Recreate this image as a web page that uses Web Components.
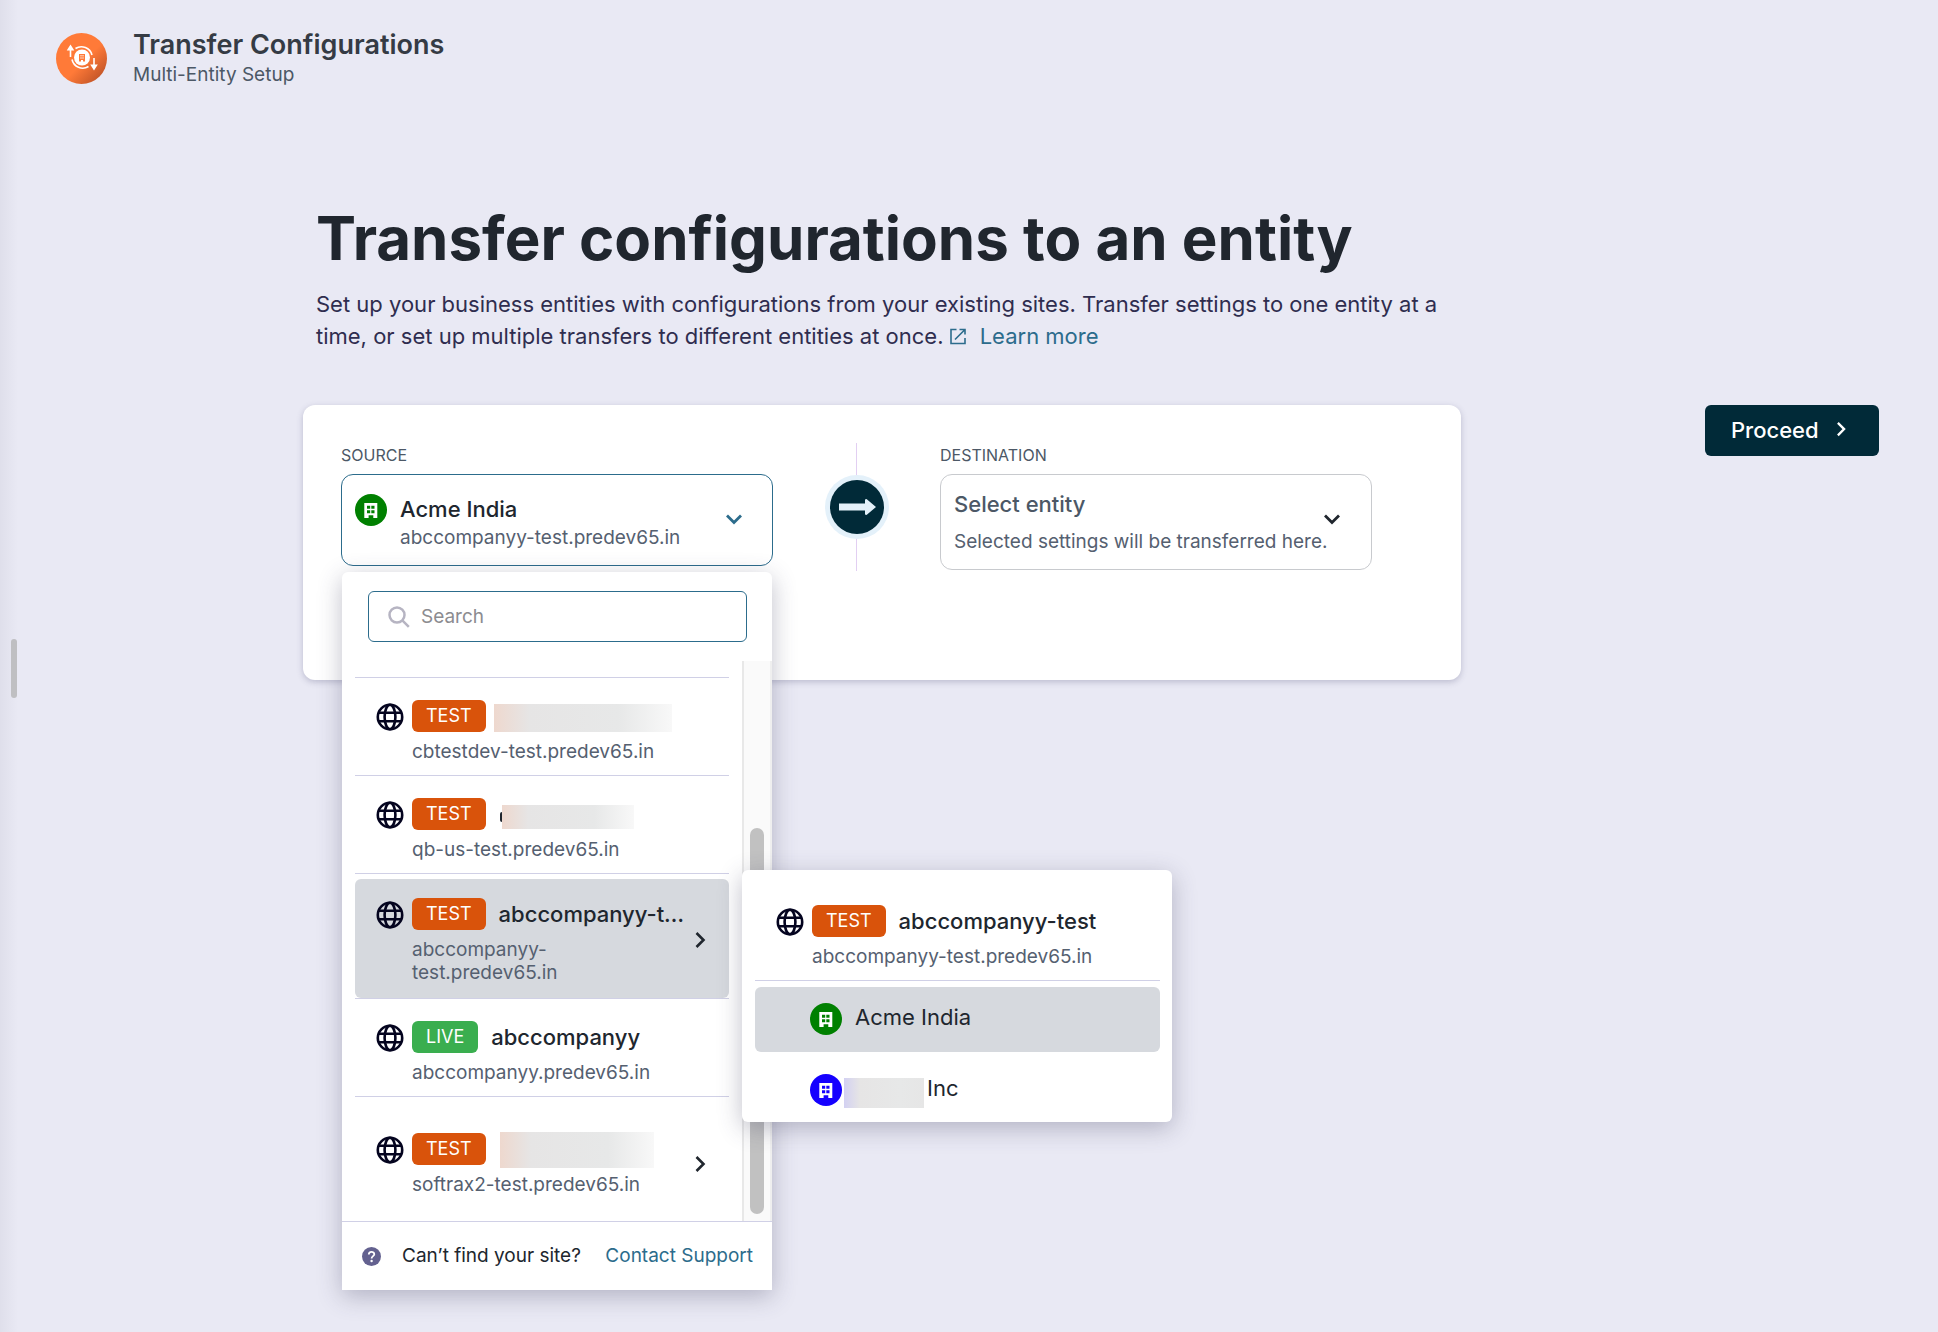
<!DOCTYPE html>
<html lang="en">
<head>
<meta charset="utf-8">
<title>Transfer Configurations</title>
<style>
    body {
        margin: 0;
        min-height: 100vh;
        background: #e9e9f4;
        color: #20262e;
        font-family: Inter, "Liberation Sans", sans-serif;
    }
</style>
</head>
<body>
<transfer-page></transfer-page>

<script>
// Icons shared by the elements below
const ICONS = {
    globe: `<svg width="28" height="28" viewBox="0 0 28 28" fill="none" stroke="#04041f" stroke-width="2.6">
        <circle cx="14" cy="14" r="12.2"/><ellipse cx="14" cy="14" rx="5.4" ry="12.2"/><path d="M2.4 9.8h23.2M2.4 18.2h23.2"/></svg>`,
    building: `<svg width="32" height="32" viewBox="0 0 32 32">
        <circle cx="16" cy="16" r="16" fill="currentColor"/>
        <path fill="#fff" fill-rule="evenodd" d="M9.300 9h13v15h-4v-2.700h-4.700V24H9.300zM12 11.700v3.100h3.200v-3.100zM16.300 11.700v3.100h3.200v-3.100zM12 16.200v3.100h3.200v-3.100zM16.300 16.200v3.100h3.200v-3.100z"/></svg>`,
    down: `<svg width="18" height="18" viewBox="0 0 18 18" fill="none" stroke="currentColor" stroke-width="2.8"><path d="M2 1.500l7 7 7-7"/></svg>`,
    right: `<svg width="18" height="18" viewBox="0 0 18 18" fill="none" stroke="currentColor" stroke-width="2.6"><path d="M5.500 1l7 7-7 7"/></svg>`
};

class EnvBadge extends HTMLElement {
    connectedCallback() {
        this.attachShadow({ mode: 'open' }).innerHTML = `
            <style>
                :host {
                    display: block;
                    flex: none;
                    padding: 0 14px;
                    border-radius: 6px;
                    background: #d9530b;
                    color: #fff;
                    font-size: 18px;
                    line-height: 32px;
                }
                :host([type="live"]) { background: #3aae4f; }
            </style>
            <slot></slot>
        `;
    }
}
customElements.define('env-badge', EnvBadge);

class SiteItem extends HTMLElement {
    connectedCallback() {
        const type = this.getAttribute('type') || 'test';
        const arrow = this.hasAttribute('more') ? `<span class="more">${ICONS.right}</span>` : '';
        this.attachShadow({ mode: 'open' }).innerHTML = `
            <style>
                :host {
                    display: block;
                    border-top: 1px solid #d0d0e6;
                }
                button {
                    display: flex;
                    align-items: flex-start;
                    gap: 8px;
                    box-sizing: border-box;
                    width: 100%;
                    padding: 22px 20px 12px 21px;
                    border: 0;
                    border-radius: 6px;
                    background: none;
                    color: inherit;
                    font: inherit;
                    text-align: left;
                }
                :host([selected]) button {
                    margin-top: 5px;
                    padding: 19px 20px 14px 21px;
                    background: #d6d9de;
                }
                :host([spacious]) button { padding: 36px 20px 25px 21px; }
                :host([flat]) { border-top: 0; }
                svg { display: block; }
                .globe { padding-top: 3px; }
                .text { flex: 1; min-width: 0; }
                .head { display: flex; align-items: center; gap: 5px; height: 32px; }
                .name {
                    flex: 1;
                    min-width: 0;
                    padding-left: 8px;
                    overflow: hidden;
                    text-overflow: ellipsis;
                    white-space: nowrap;
                    font-size: 22px;
                    font-weight: 500;
                    line-height: 32px;
                }
                .url {
                    margin-top: 8px;
                    color: #556070;
                    font-size: 19px;
                    line-height: 23px;
                }
                .more { align-self: center; margin-left: -8px; }
            </style>
            <button type="button">
                <span class="globe">${ICONS.globe}</span>
                <div class="text">
                    <div class="head">
                        <env-badge type="${type}">${type.toUpperCase()}</env-badge>
                        <span class="name"><slot></slot></span>
                    </div>
                    <div class="url">${this.getAttribute('url')}</div>
                </div>
                ${arrow}
            </button>
        `;
    }
}
customElements.define('site-item', SiteItem);

// Grey smear drawn in place of a hidden name
class HiddenName extends HTMLElement {
    connectedCallback() {
        this.attachShadow({ mode: 'open' }).innerHTML = `
            <style>
                :host {
                    display: flex;
                    align-items: center;
                    width: var(--w, 132px);
                    height: var(--h, 28px);
                    background: linear-gradient(90deg, var(--from, #eed8ce), #e6e5e5 20%, #e7e8e8 70%, var(--to, #f8f8f8));
                }
                :host([edge])::before {
                    content: "";
                    width: 2px;
                    height: 10px;
                    margin-left: -2px;
                    border-radius: 2px 0 0 2px;
                    background: #20262e;
                }
            </style>
        `;
    }
}
customElements.define('hidden-name', HiddenName);

class EntityItem extends HTMLElement {
    connectedCallback() {
        this.attachShadow({ mode: 'open' }).innerHTML = `
            <style>
                :host { display: block; }
                button {
                    display: flex;
                    align-items: flex-start;
                    gap: 13px;
                    width: 100%;
                    padding: 16px 0 17px 55px;
                    border: 0;
                    border-radius: 6px;
                    background: none;
                    color: inherit;
                    font: inherit;
                    font-size: 22px;
                    line-height: 28px;
                }
                :host([selected]) button { background: #d6d9de; }
                :host([tight]) button { gap: 2px; padding-bottom: 14px; }
                .icon { color: var(--icon, #008000); height: 32px; }
                ::slotted(*) { display: flex; gap: 3px; }
            </style>
            <button type="button"><span class="icon">${ICONS.building}</span><slot></slot></button>
        `;
    }
}
customElements.define('entity-item', EntityItem);

class EntityMenu extends HTMLElement {
    connectedCallback() {
        this.attachShadow({ mode: 'open' }).innerHTML = `
            <style>
                :host {
                    display: block;
                    box-sizing: border-box;
                    padding: 13px 12px 0 13px;
                    border-radius: 6px;
                    background: #fff;
                    box-shadow: 0 6px 24px rgba(60, 60, 90, .32);
                }
                .list { border-top: 1px solid #d0d0e6; padding-top: 6px; }
                entity-item + entity-item { margin-top: 6px; }
            </style>
            <site-item flat type="test" url="abccompanyy-test.predev65.in">abccompanyy-test</site-item>
            <div class="list">
                <entity-item selected>Acme India</entity-item>
                <entity-item tight style="--icon: #1500ff">
                    <span><hidden-name style="--w: 80px; --h: 30px; --from: #d3d1f2; --to: #e6e6e6; margin-top: 4px"></hidden-name>Inc</span>
                </entity-item>
            </div>
        `;
    }
}
customElements.define('entity-menu', EntityMenu);

class SiteDropdown extends HTMLElement {
    connectedCallback() {
        this.attachShadow({ mode: 'open' }).innerHTML = `
            <style>
                :host {
                    display: block;
                    border-radius: 6px 6px 0 0;
                    background: #fff;
                    box-shadow: 0 6px 24px rgba(60, 60, 90, .32);
                }
                .search {
                    display: flex;
                    align-items: center;
                    gap: 11px;
                    height: 49px;
                    margin: 0 25px 0 26px;
                    padding: 0 19px;
                    border: 1px solid #2c6c8c;
                    border-radius: 6px;
                }
                .search svg { flex: none; }
                input {
                    flex: 1;
                    min-width: 0;
                    padding: 0;
                    border: 0;
                    outline: 0;
                    background: none;
                    font: 19px Inter, "Liberation Sans", sans-serif;
                }
                input::placeholder { color: #8c8c90; }
                .top { padding: 19px 0; }
                .body { display: flex; }
                .list { flex: 1; min-width: 0; padding: 16px 13px 0; }
                .track {
                    display: flex;
                    box-sizing: border-box;
                    width: 30px;
                    padding: 167px 6px 7px 6px;
                    border-left: 2px solid #e8e8e8;
                    border-right: 2px solid #efefef;
                    background: #fafafa;
                }
                .thumb { width: 16px; border-radius: 8px; background: #c1c1c1; }
                footer {
                    display: flex;
                    align-items: center;
                    box-sizing: border-box;
                    height: 69px;
                    padding: 0 19px 0 20px;
                    border-top: 1px solid #d0d0e6;
                    font-size: 19px;
                    line-height: 28px;
                    white-space: nowrap;
                }
                footer span { margin: 0 auto 0 21px; }
                a { color: #2c6c8c; text-decoration: none; }
                entity-menu {
                    position: absolute;
                    top: 298px;
                    left: 400px;
                    width: 100%;
                }
            </style>
            <div class="top">
                <label class="search">
                    <svg width="22" height="22" viewBox="0 0 22 22" fill="none" stroke="#b6b4c2" stroke-width="2.500"><circle cx="9" cy="9" r="7.500"/><path d="M14.300 14.300l6.500 6.500"/></svg>
                    <input type="text" placeholder="Search" aria-label="Search">
                </label>
            </div>
            <div class="body">
                <div class="list">
                    <site-item url="cbtestdev-test.predev65.in"><hidden-name style="--w: 178px; margin: 4px 0 0 -5px"></hidden-name></site-item>
                    <site-item url="qb-us-test.predev65.in"><hidden-name edge style="--h: 24px; margin: 6px 0 0 3px"></hidden-name></site-item>
                    <site-item selected more url="abccompanyy-test.predev65.in">abccompanyy-test</site-item>
                    <site-item type="live" url="abccompanyy.predev65.in">abccompanyy</site-item>
                    <site-item spacious more url="softrax2-test.predev65.in"><hidden-name style="--w: 154px; --h: 36px; margin: 2px 0 0 1px"></hidden-name></site-item>
                </div>
                <div class="track"><div class="thumb"></div></div>
            </div>
            <footer>
                <svg width="19" height="19" viewBox="0 0 19 19" fill="none">
                    <circle cx="9.500" cy="9.500" r="9.500" fill="#63618f"/>
                    <path d="M6.800 7.500c0-3.600 5.500-3.400 5.500-.3 0 1.900-2.700 2-2.700 4.200" stroke="#fff" stroke-width="1.800"/>
                    <circle cx="9.600" cy="14" r="1.200" fill="#fff"/>
                </svg>
                <span>Can’t find your site?</span>
                <a href="#support">Contact Support</a>
            </footer>
            <entity-menu></entity-menu>
        `;
    }
}
customElements.define('site-dropdown', SiteDropdown);

class EntityPicker extends HTMLElement {
    connectedCallback() {
        const active = this.hasAttribute('active');
        this.attachShadow({ mode: 'open' }).innerHTML = `
            <style>
                :host { display: block; min-width: 0; }
                label {
                    display: block;
                    margin-bottom: 7px;
                    color: #4c5866;
                    font-size: 16px;
                    line-height: 24px;
                    text-transform: uppercase;
                }
                .field { position: relative; }
                button {
                    display: flex;
                    align-items: center;
                    box-sizing: border-box;
                    width: 100%;
                    padding: 15px 30px 13px 13px;
                    border: 1px solid #c8cace;
                    border-radius: 12px;
                    background: #fff;
                    color: #20262e;
                    font: inherit;
                    text-align: left;
                    white-space: nowrap;
                }
                .icon { align-self: flex-start; height: 32px; margin-right: 13px; color: #008000; }
                .text { flex: 1; min-width: 0; }
                .name { color: #4c5866; font-size: 22px; font-weight: 500; line-height: 28px; }
                .note { margin-top: 10px; color: #556070; font-size: 19px; line-height: 28px; }
                button > svg { flex: none; }
                :host([active]) button { padding: 19px 29px 13px 13px; border-color: #2c6c8c; }
                :host([active]) .name { color: #20262e; line-height: 30px; }
                :host([active]) .note { margin: 0; }
                :host([active]) button > svg { color: #2c6c8c; }
                ::slotted(site-dropdown) {
                    position: absolute;
                    z-index: 1;
                    top: 98px;
                    left: 1px;
                    right: 1px;
                }
            </style>
            <label for="picker">${this.getAttribute('label')}</label>
            <div class="field">
                <button id="picker" type="button" aria-haspopup="listbox" aria-expanded="${active}">
                    ${active ? `<span class="icon">${ICONS.building}</span>` : ''}
                    <div class="text">
                        <div class="name">${this.getAttribute('name')}</div>
                        <div class="note">${this.getAttribute('note')}</div>
                    </div>
                    ${ICONS.down}
                </button>
                <slot></slot>
            </div>
        `;
    }
}
customElements.define('entity-picker', EntityPicker);

class TransferCard extends HTMLElement {
    connectedCallback() {
        this.attachShadow({ mode: 'open' }).innerHTML = `
            <style>
                :host {
                    display: grid;
                    grid-template-columns: 1fr 167px 1fr;
                    align-items: start;
                    box-sizing: border-box;
                    min-height: 275px;
                    padding: 38px 89px 38px 38px;
                    border-radius: 12px;
                    background: #fff;
                    box-shadow: 0 2px 6px rgba(70, 70, 110, .28);
                }
                .link {
                    display: grid;
                    place-items: center;
                    height: 128px;
                    background: linear-gradient(#e2cff2, #e2cff2) center / 1px 100% no-repeat;
                }
            </style>
            <entity-picker active label="Source" name="Acme India" note="abccompanyy-test.predev65.in">
                <site-dropdown></site-dropdown>
            </entity-picker>
            <div class="link">
                <svg width="64" height="64" viewBox="0 0 64 64">
                    <circle cx="32" cy="32" r="32" fill="#e4f1fa"/>
                    <circle cx="32" cy="32" r="27" fill="#012a38"/>
                    <path d="M14 28.500h26v-4l1.500-.5 9.500 8-9.500 8-1.500-.5v-4H14z" fill="#e4f1fa"/>
                </svg>
            </div>
            <entity-picker label="Destination" name="Select entity" note="Selected settings will be transferred here."></entity-picker>
        `;
    }
}
customElements.define('transfer-card', TransferCard);

class AppHeader extends HTMLElement {
    connectedCallback() {
        this.attachShadow({ mode: 'open' }).innerHTML = `
            <style>
                :host {
                    display: flex;
                    align-items: center;
                    gap: 26px;
                    padding: 28px 56px 0;
                }
                .title { color: #353b44; font-size: 27px; font-weight: 600; line-height: 34px; }
                .sub { color: #4c5866; font-size: 19px; line-height: 26px; }
            </style>
            <svg width="51" height="51" viewBox="0 0 51 51" fill="none">
                <defs>
                    <linearGradient id="g" x1="0" y1="0" x2="1" y2="1">
                        <stop offset=".55" stop-color="#ff7a38"/><stop offset=".9" stop-color="#bf5327"/>
                    </linearGradient>
                </defs>
                <circle cx="25.500" cy="25.500" r="25.500" fill="url(#g)"/>
                <circle cx="26" cy="24.500" r="8" fill="#fff"/>
                <path d="M19.500 15.500a11 11 0 0 1 16.500 6.500M16 26.500a11 11 0 0 0 16.500 7M14.500 24v-8M38 25v8" stroke="#fff" stroke-width="1.600"/>
                <path d="M14.500 11.500l3.800 6h-7.600zM38 37.500l3.800-6h-7.600z" fill="#fff"/>
                <path d="M23 21h6v7.500h-2V27h-2v1.500h-2z" fill="#ff7a38"/>
                <path d="M24 22.800h4M24 25h4" stroke="#fff" stroke-width=".7"/>
            </svg>
            <div>
                <div class="title"><slot name="title"></slot></div>
                <div class="sub"><slot name="subtitle"></slot></div>
            </div>
        `;
    }
}
customElements.define('app-header', AppHeader);

class TransferPage extends HTMLElement {
    connectedCallback() {
        this.attachShadow({ mode: 'open' }).innerHTML = `
            <style>
                :host {
                    display: block;
                    position: relative;
                    min-height: 100vh;
                    background: linear-gradient(90deg, #dfdfeb, #e9e9f4 18px);
                }
                .splitter {
                    position: absolute;
                    top: 48%;
                    left: 11px;
                    width: 6px;
                    height: 59px;
                    border-radius: 3px;
                    background: #bfbfc2;
                }
                main { padding: 114px 59px 0 303px; }
                .intro { padding-left: 13px; max-width: 1130px; }
                h1 { margin: 0 0 14px; font-size: 60px; font-weight: 700; line-height: 72px; white-space: nowrap; }
                p { margin: 0 0 53px; color: #2f2d4f; font-size: 22px; line-height: 32px; }
                a {
                    display: inline-flex;
                    align-items: center;
                    gap: 14px;
                    vertical-align: top;
                    color: #2c6c8c;
                    text-decoration: none;
                }
                .row { display: flex; align-items: flex-start; gap: 244px; }
                transfer-card { flex: 1; }
                .proceed {
                    display: flex;
                    align-items: center;
                    justify-content: space-between;
                    width: 174px;
                    height: 51px;
                    padding: 0 30px 2px 26px;
                    border: 0;
                    border-radius: 6px;
                    background: #012a38;
                    color: #fff;
                    font: inherit;
                    font-size: 22px;
                    font-weight: 500;
                }
                .proceed svg { width: 16px; height: 16px; }
            </style>
            <div class="splitter"></div>
            <app-header>
                <span slot="title">Transfer Configurations</span>
                <span slot="subtitle">Multi-Entity Setup</span>
            </app-header>
            <main>
                <div class="intro">
                    <h1>Transfer configurations to an entity</h1>
                    <p>Set up your business entities with configurations from your existing sites. Transfer settings to one entity at a time, or set up multiple transfers to different entities at once.
                        <a href="#learn-more"><svg width="16" height="17" viewBox="0 0 16 17" fill="none" stroke="currentColor" stroke-width="1.600"><path d="M6.500 1.500H1v14h14V10M9.500 1.500H15v5M15 1.500L5 11.500"/></svg>Learn more</a></p>
                </div>
                <div class="row">
                    <transfer-card></transfer-card>
                    <button class="proceed" type="button">Proceed ${ICONS.right}</button>
                </div>
            </main>
        `;
    }
}
customElements.define('transfer-page', TransferPage);
</script>
</body>
</html>
